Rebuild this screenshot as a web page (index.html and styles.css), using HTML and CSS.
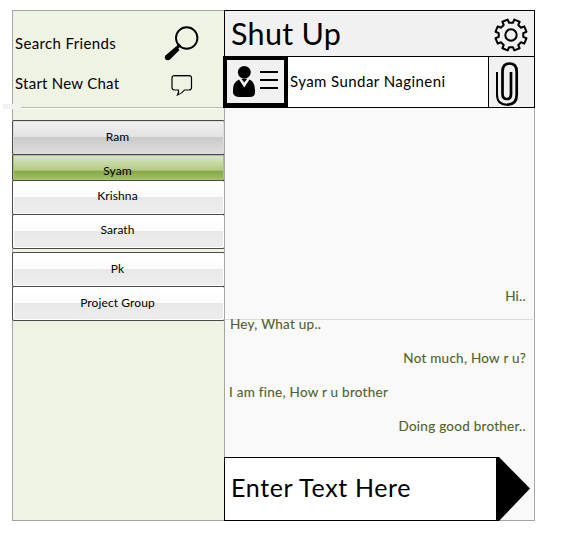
FILE: index.html
```html
<!DOCTYPE html>
<html lang="en">
<head>
<meta charset="utf-8">
<title>Shut Up</title>
<link rel="stylesheet" href="styles.css">
</head>
<body>
<main class="app">
  <aside class="sidebar">
    <div class="actions">
      <div class="action"><span class="search-label">Search Friends</span>
        <svg class="search-icon" width="38" height="40" viewBox="0 0 38 40"><circle cx="24.700" cy="16" r="10.700" fill="none" stroke="#000" stroke-width="1.900"/><path d="M18 22.500 14.500 26.500" stroke="#000" stroke-width="3"/><path d="M14 24.500 17.500 28 8 37.500Q5.500 39 3.300 37.200Q1.800 35.500 3.500 33.500Z"/></svg>
      </div>
      <div class="action"><span class="new-label">Start New Chat</span>
        <svg class="bubble-icon" width="24" height="24" viewBox="0 0 24 24"><path d="M4.500 2.500H19Q21.500 2.500 21.500 5V14.500Q21.500 17 19 17H14.500Q12 20.500 7.500 22Q9 19.500 8.500 17H4.500Q2 17 2 14.500V5Q2 2.500 4.500 2.500Z" fill="none" stroke="#000" stroke-width="1.200"/><path d="M4 2.700H20" stroke="#000" stroke-width="1.400"/></svg>
      </div>
    </div>
    <i class="stub"></i>
    <nav class="contacts">
      <button class="contact pressed"><span>Ram</span></button>
      <button class="contact active"><span>Syam</span></button>
      <button class="contact raised"><span>Krishna</span></button>
      <button class="contact raised"><span>Sarath</span></button>
      <button class="contact spaced"><span>Pk</span></button>
      <button class="contact"><span>Project Group</span></button>
    </nav>
  </aside>
  <section class="chat">
    <header class="topbar">
      <h1>Shut Up</h1>
      <svg width="36" height="36" viewBox="-18 -18 36 36" fill="none" stroke="#000" stroke-width="2"><circle r="5.700"/><path id="gear" stroke-linejoin="round" d=""/></svg>
    </header>
    <div class="peer">
      <div class="avatar">
        <svg width="57" height="43" viewBox="227 60 57 43"><circle cx="244.300" cy="72.300" r="6.400"/><path d="M239 79.500Q233 82 233 90.500V93Q234 97 239.500 97H249.500Q255 97 255 92.500V90Q255 82 249.500 79.500L244.300 87.500Z"/><path d="M241.500 79H247L244.300 82.500Z"/><path d="M260 72H278M260 80H278M260 88H278" stroke="#000" stroke-width="2"/></svg>
      </div>
      <div class="peer-name"><span>Syam Sundar Nagineni</span></div>
      <div class="attach">
        <svg width="45" height="50" viewBox="489 57 45 50" fill="none" stroke="#000"><path stroke-width="2" d="M497 72V94.500Q497 104.700 507 104.700"/><path stroke-width="2.700" d="M507 104.700Q516.700 104.700 516.700 95V71.500Q516.700 63.500 509.500 63.500Q502.500 63.500 502.500 71.500V94Q502.500 99 507 99Q511 99 511 94V72"/></svg>
      </div>
    </div>
    <div class="messages">
      <div class="history"><p class="mine m1">Hi..</p></div>
      <p class="theirs m2">Hey, What up..</p>
      <p class="mine m3">Not much, How r u?</p>
      <p class="theirs m4">I am fine, How r u brother</p>
      <p class="mine m5">Doing good brother..</p>
    </div>
    <footer class="compose">
      <div class="entry"><span>Enter Text Here</span></div>
      <svg width="34" height="64" viewBox="0 0 34 64"><path d="M0 0H2L33 31.500 2 64H0Z"/></svg>
    </footer>
  </section>
</main>
<script src="gear.js"></script>
</body>
</html>
```
FILE: gear.js
```js
// Eight-tooth gear outline, centred on the origin
const points = [];
for (let i = 0; i < 8; i++) {
  for (const [radius, offset] of [[12.4, -13.5], [15.8, -10.5], [15.8, 10.5], [12.4, 13.5]]) {
    const a = (i * 45 + 22.5 + offset) * Math.PI / 180;
    points.push((radius * Math.cos(a)).toFixed(2) + " " + (radius * Math.sin(a)).toFixed(2));
  }
}
document.getElementById("gear").setAttribute("d", "M" + points.join("L") + "Z");
```
FILE: styles.css
```css
* { box-sizing: border-box; }
body { margin: 0; background: #fff; color: #000; font-family: Lato, "Open Sans", sans-serif; font-variant-ligatures: none; }
h1, p { margin: 0; font-weight: 400; white-space: nowrap; }
span { white-space: nowrap; }
svg { display: block; flex: none; }
.app { display: flex; width: 523px; height: 511px; margin: 10px 0 0 12px; }
.sidebar { position: relative; flex: none; width: 213px; background: #eff3e4; border: 1px solid #a5a5a5; }
.actions { height: 98px; padding-top: 12px; border-bottom: 1px solid #fff; box-shadow: inset 0 -1px #b5b5b5; }
.action { display: flex; align-items: center; justify-content: space-between; height: 40px; padding-left: 2px; font-size: 15px; letter-spacing: 0.36px; }
.new-label { letter-spacing: 0.25px; }
.search-icon { margin: -2px 24px 0 0; }
.bubble-icon { margin: 3px 30px 0 0; }
.stub { position: absolute; left: -10px; top: 93px; width: 18px; height: 5px; background: #f2f2f2; }
.contacts { margin: 11px -1px 0; display: flex; flex-direction: column; }
.contact { display: flex; align-items: center; justify-content: center; height: 35px; margin: 0 0 -1px; padding: 0 2px 3px 0; border: 1px solid #4b4b4b; border-radius: 2px; background: linear-gradient(#fff 0, #fbfbfb 50%, #e8e8e8 50%, #eee 100%); box-shadow: inset 0 0 0 1px #fff; font: 12px Lato, sans-serif; letter-spacing: 0.1px; color: #000; }
.contact.pressed { background: linear-gradient(#f2f2f2, #e2e2e2 49%, #cacaca 50%, #dedede); box-shadow: inset 0 0 0 1px #ddd; }
.contact.active { height: 27px; padding: 5px 2px 0 0; background: linear-gradient(#dce8c6, #b4cb85 60%, #86a846 66%, #a4c568); box-shadow: inset 0 0 0 1px #a9c477; }
.contact.raised { padding-bottom: 5px; }
.contact.spaced { margin-top: 4px; }
.chat { position: relative; flex: none; display: flex; flex-direction: column; width: 311px; margin-left: -1px; background: #f9f9f9; border: 1px solid #a5a5a5; }
.topbar { display: flex; align-items: center; justify-content: space-between; height: 47px; margin: -1px -1px 0; padding: 2px 5px 0 6px; border: 1px solid #000; background: #f1f1f1; }
h1 { margin-top: -3px; font-size: 30.5px; letter-spacing: 0.3px; line-height: 40px; }
.peer { display: flex; flex: none; height: 52px; margin: -1px -1px 0; border: 1px solid #000; background: #fff; }
.avatar { flex: none; width: 65px; height: 52px; margin: -1px 0 0 -2px; border: 4px solid #000; border-bottom-width: 5px; background: #f1f1f1; }
.peer-name { display: flex; align-items: center; flex: 1; padding: 0 0 2px 2px; font-size: 15px; letter-spacing: 0.43px; }
.attach { flex: none; width: 46px; border-left: 1px solid #000; background: #f1f1f1; }
.messages { flex: 1; color: #4f6228; font-size: 13.5px; line-height: 20px; letter-spacing: 0.26px; -webkit-text-stroke: 0.1px #4f6228; }
.history { display: flex; flex-direction: column; justify-content: flex-end; height: 212px; padding-bottom: 13px; border-bottom: 1px solid #ddd; margin-right: -1px; }
.mine { text-align: right; margin-right: 8px; }
.history .mine { margin-right: 9px; }
.theirs { margin-left: 5px; }
.m2 { margin-top: -6px; margin-bottom: 14px; }
.m3, .m4 { margin-bottom: 14px; }
.m4 { margin-left: 4px; }
.compose { display: flex; flex: none; height: 64px; margin: 0 -1px -1px; }
.entry { display: flex; align-items: center; width: 273px; padding: 0 0 4px 6px; border: 1px solid #000; background: #fff; font-size: 25px; letter-spacing: 0.65px; }
```
